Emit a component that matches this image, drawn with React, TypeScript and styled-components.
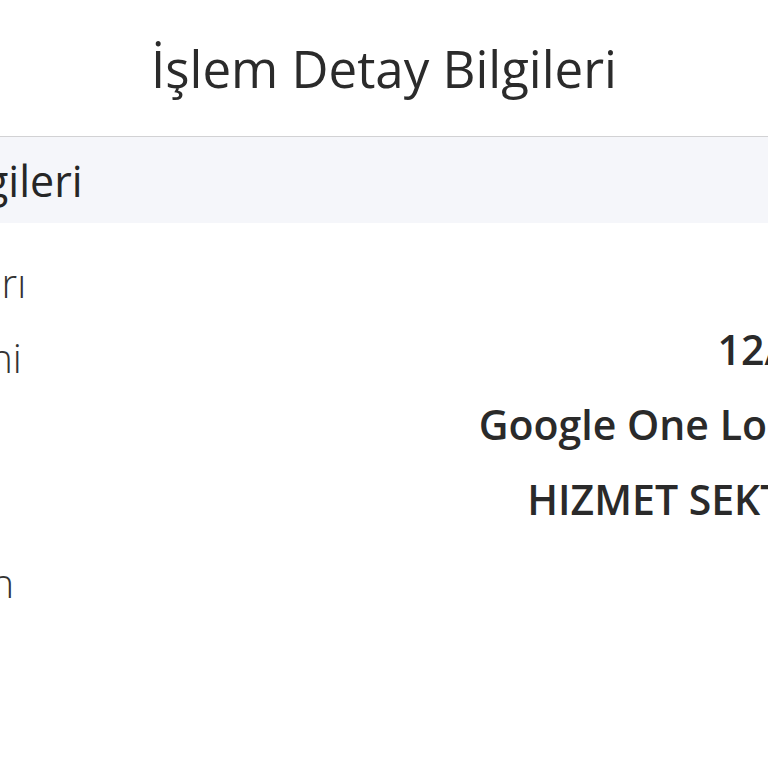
import React from "react";
import styled, { createGlobalStyle } from "styled-components";

const GlobalStyle = createGlobalStyle`
  html, body {
    margin: 0;
    padding: 0;
    background: #ffffff;
    overflow: hidden;
  }
  body {
    font-family: "Open Sans", "Noto Sans", sans-serif;
    color: #2b2b2b;
  }
`;

const rows = [
  { label: "İşlem Tutarı", value: "" },
  { label: "İşlem Tarihi", value: "12/05/2024" },
  { label: "İşyeri", value: "Google One London GB" },
  { label: "Sektör", value: "HIZMET SEKTÖRLERİ." },
  { label: "İade Edilen", value: "" },
];

export default function App() {
  return (
    <>
      <GlobalStyle />
      <Screen>
        <Title>İşlem Detay Bilgileri</Title>
        <Card>
          <SectionHeader>İşlem Bilgileri</SectionHeader>
          <List>
            {rows.map((row) => (
              <Row key={row.label}>
                <Label>{row.label}</Label>
                <Value>{row.value}</Value>
              </Row>
            ))}
          </List>
        </Card>
      </Screen>
    </>
  );
}

const Screen = styled.div`
  width: 1170px;
  margin-left: -201px;
  display: flex;
  flex-direction: column;
`;

const Title = styled.h1`
  margin: 0;
  height: 136px;
  display: flex;
  align-items: center;
  justify-content: center;
  font-size: 51px;
  font-weight: 400;
  color: #2b2b2b;
`;

const Card = styled.section`
  border-top: 1px solid #d2d2d4;
  display: flex;
  flex-direction: column;
`;

const SectionHeader = styled.div`
  height: 86px;
  padding: 0 18px;
  display: flex;
  align-items: center;
  background: #f5f6fa;
  font-size: 43px;
  font-weight: 400;
  color: #262626;
`;

const List = styled.div`
  padding: 22px 32px 0 18px;
  display: flex;
  flex-direction: column;
`;

const Row = styled.div`
  height: 75px;
  display: flex;
  align-items: flex-end;
  justify-content: space-between;
  white-space: nowrap;
`;

const Label = styled.span`
  font-size: 40px;
  line-height: 75px;
  font-weight: 300;
  color: #333333;
`;

const Value = styled.span`
  font-size: 41px;
  line-height: 75px;
  padding-bottom: 8px;
  font-weight: 600;
  color: #2a2a2a;
  text-align: right;
`;
